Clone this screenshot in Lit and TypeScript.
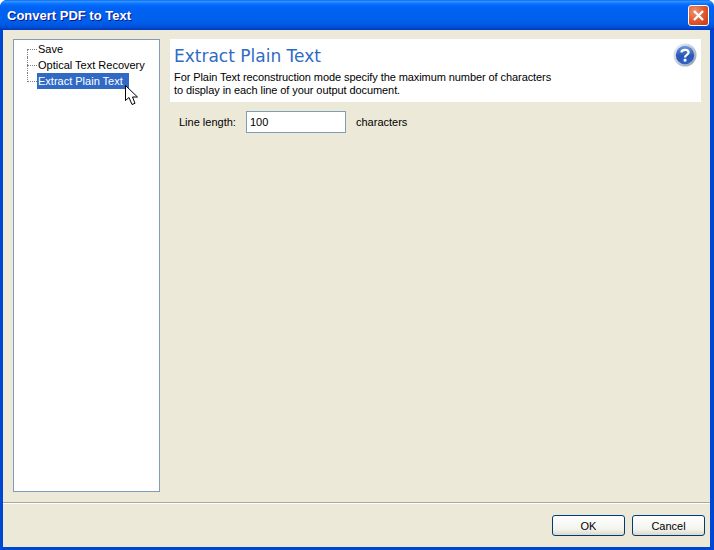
import { LitElement, html, css } from "lit";
import { customElement } from "lit/decorators.js";

@customElement("app-root")
export class AppRoot extends LitElement {
  static styles = css`
    :host { display: block; width: 714px; height: 550px; font-family: "Liberation Sans", Arial, sans-serif; font-size: 11px; color: #000; overflow: hidden; }
    * { box-sizing: border-box; }
    .win { width: 714px; height: 550px; display: flex; flex-direction: column; background: #0046d5; border-radius: 7px 7px 0 0; overflow: hidden; position: relative; }
    .title { height: 30px; flex: none; display: flex; align-items: center; justify-content: space-between; padding: 1px 5px 0 7px;
      background: linear-gradient(180deg, #0058ee 0, #3593ff 1px, #288eff 2px, #127dff 3px, #0369fc 5px, #0062f4 8px, #0061ef 14px, #0060ee 20px, #0058e0 25px, #0050d8 27px, #0040c8 29px, #0038b8 30px); }
    .title-text { font-family: "Liberation Sans", Arial, sans-serif; font-weight: 700; font-size: 13px; line-height: 16px; padding-top: 1px; color: #fff; text-shadow: 1px 1px 0 #0f1089; }
    .close { width: 21px; height: 21px; border: 1px solid #fff; border-radius: 3px; background: radial-gradient(circle at 30% 30%, #ef9276, #e1592f 50%, #c8370f 100%); display: flex; align-items: center; justify-content: center; }
    .client { flex: 1; margin: 0 4px 3px 3px; background: #ece9d8; display: flex; flex-direction: column; min-height: 0; }
    .main { flex: 1; display: flex; gap: 10px; padding: 9px 9px 10px 10px; min-height: 0; }
    .tree { width: 147px; flex: none; background: #fff; border: 1px solid #7f9db9; padding: 1px 0 0 13px; display: flex; flex-direction: column; }
    .row { height: 16px; display: flex; align-items: center; }
    .dots { width: 10px; flex: none; height: 16px; position: relative; }
    .dots::before { content: ""; position: absolute; left: 0; top: 0; bottom: 0; border-left: 1px dotted #808080; }
    .dots::after { content: ""; position: absolute; left: 0; right: 0; top: 8px; border-top: 1px dotted #808080; }
    .row:first-child .dots::before { top: 8px; }
    .row:last-child .dots::before { bottom: 7px; }
    .label { padding: 0 5px 0 1px; height: 16px; line-height: 17px; white-space: nowrap; }
    .sel { width: 92px; background: #316ac5; color: #fff; }
    .panel { flex: 1; min-width: 0; display: flex; flex-direction: column; }
    .head { height: 63px; flex: none; background: #fff; padding: 6px 4px 0 4px; position: relative; }
    .h { font-family: "DejaVu Sans", sans-serif; font-size: 17px; line-height: 22px; color: #316ac5; }
    .desc { margin-top: 4px; line-height: 13px; letter-spacing: -0.08px; }
    .help { position: absolute; top: 4px; right: 4px; width: 24px; height: 24px; }
    .field { display: flex; align-items: center; padding: 9px 0 0 9px; }
    .field .lab { width: 67px; }
    .input { width: 100px; height: 22px; border: 1px solid #7f9db9; background: #fff; padding: 0 3px; display: flex; align-items: center; }
    .unit { margin-left: 10px; }
    .sep { flex: none; height: 2px; border-top: 1px solid #aca899; border-bottom: 1px solid #fff; }
    .foot { flex: none; height: 43px; display: flex; justify-content: flex-end; gap: 7px; padding: 11px 5px 0 0; }
    .btn { width: 73px; height: 21px; border: 1px solid #003c74; border-radius: 3px; background: linear-gradient(180deg, #fff, #f3f3ee 70%, #dcd8ca); display: flex; align-items: center; justify-content: center; }
    .cursor { position: absolute; left: 125px; top: 85px; width: 14px; height: 21px; }
  `;

  render() {
    return html`
      <div class="win">
        <div class="title">
          <span class="title-text">Convert PDF to Text</span>
          <div class="close">
            <svg width="13" height="13" viewBox="0 0 13 13"><path d="M2 2 L11 11 M11 2 L2 11" stroke="#fff" stroke-width="2.4"/></svg>
          </div>
        </div>
        <div class="client">
          <div class="main">
            <div class="tree">
              <div class="row"><span class="dots"></span><span class="label">Save</span></div>
              <div class="row"><span class="dots"></span><span class="label">Optical Text Recovery</span></div>
              <div class="row"><span class="dots"></span><span class="label sel">Extract Plain Text</span></div>
            </div>
            <div class="panel">
              <div class="head">
                <div class="h">Extract Plain Text</div>
                <div class="desc">For Plain Text reconstruction mode specify the maximum number of characters<br />to display in each line of your output document.</div>
                <svg class="help" viewBox="0 0 24 24">
                  <defs>
                    <linearGradient id="ring" x1="0" y1="0" x2="1" y2="1"><stop offset="0" stop-color="#f2f5fb"/><stop offset="1" stop-color="#8f9fb5"/></linearGradient>
                    <linearGradient id="ball" x1="0" y1="0" x2="0" y2="1"><stop offset="0" stop-color="#6a98e0"/><stop offset="0.55" stop-color="#2a56b4"/><stop offset="1" stop-color="#2f62c4"/></linearGradient>
                  </defs>
                  <circle cx="12" cy="12" r="11.5" fill="url(#ring)"/>
                  <circle cx="12" cy="12" r="9.2" fill="url(#ball)"/>
                  <path d="M8.4 9.4 C8.6 6.2 15.4 5.8 15.6 9.4 C15.7 12 12 11.8 12 14.4" fill="none" stroke="#fff" stroke-width="2.3"/>
                  <rect x="10.7" y="15.8" width="2.7" height="2.7" fill="#fff"/>
                </svg>
              </div>
              <div class="field">
                <span class="lab">Line length:</span>
                <div class="input">100</div>
                <span class="unit">characters</span>
              </div>
            </div>
          </div>
          <div class="sep"></div>
          <div class="foot">
            <div class="btn">OK</div>
            <div class="btn">Cancel</div>
          </div>
        </div>
        <svg class="cursor" viewBox="0 0 14 21"><path d="M0.5 0.5 L0.5 15.5 L4 12.5 L7 19.5 L10 18.3 L7.5 12 L12.5 12 Z" fill="#fff" stroke="#000" stroke-width="1"/></svg>
      </div>
    `;
  }
}
